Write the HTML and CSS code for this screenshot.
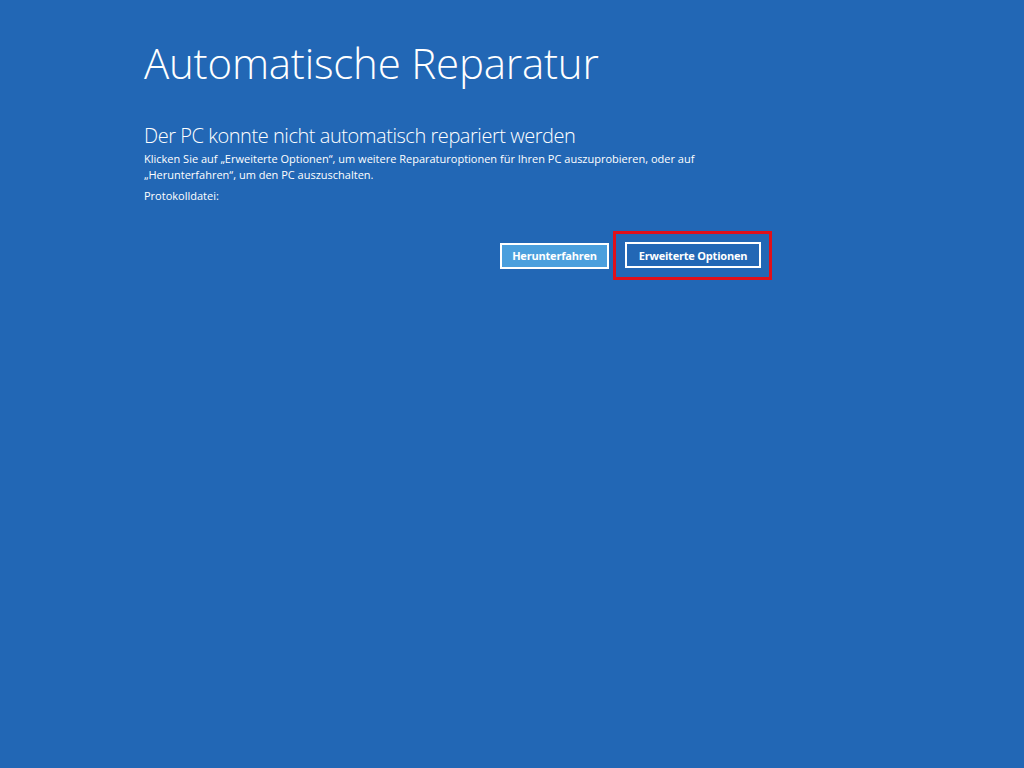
FILE: index.html
```html
<!DOCTYPE html>
<html lang="de">
<head>
<meta charset="utf-8">
<title>Automatische Reparatur</title>
<link rel="stylesheet" href="styles.css">
</head>
<body>
<main class="screen">
  <h1 class="title">Automatische Reparatur</h1>
  <h2 class="subtitle">Der PC konnte nicht automatisch repariert werden</h2>
  <p class="desc">Klicken Sie auf „Erweiterte Optionen“, um weitere Reparaturoptionen für Ihren PC auszuprobieren, oder auf<br>„Herunterfahren“, um den PC auszuschalten.</p>
  <p class="log">Protokolldatei:</p>
  <div class="actions">
    <button class="btn btn-primary">Herunterfahren</button>
    <div class="highlight">
      <button class="btn btn-secondary">Erweiterte Optionen</button>
    </div>
  </div>
</main>
</body>
</html>
```
FILE: styles.css
```css
html, body {
  margin: 0;
  padding: 0;
  height: 100%;
  background: #2267b5;
}
body {
  font-family: "Open Sans", "Noto Sans", sans-serif;
  color: #ffffff;
}
.screen {
  padding: 35px 0 0 144px;
  width: 640px;
}
.title {
  margin: 0;
  font-weight: 300;
  font-size: 42px;
  line-height: 56px;
  letter-spacing: -0.2px;
}
.subtitle {
  margin: 33px 0 0;
  font-weight: 300;
  font-size: 20px;
  line-height: 24px;
  letter-spacing: -0.45px;
}
.desc {
  margin: 3px 0 0;
  font-size: 11px;
  line-height: 16px;
}
.log {
  margin: 5px 0 0;
  font-size: 11px;
  line-height: 16px;
}
.actions {
  display: flex;
  align-items: center;
  justify-content: flex-end;
  margin-top: 27px;
  width: 628px;
  gap: 4px;
}
.btn {
  box-sizing: border-box;
  font-family: "Open Sans", sans-serif;
  font-weight: 700;
  font-size: 11px;
  letter-spacing: -0.2px;
  white-space: nowrap;
  color: #ffffff;
  height: 26px;
  border: 2px solid #ffffff;
  padding: 0;
  cursor: pointer;
}
.btn-primary {
  background: #4a9fdd;
  width: 109px;
}
.btn-secondary {
  background: #2267b5;
  width: 136px;
}
.highlight {
  display: flex;
  border: 3px solid #e0101a;
  padding: 8px 8px 9px 9px;
}
```
